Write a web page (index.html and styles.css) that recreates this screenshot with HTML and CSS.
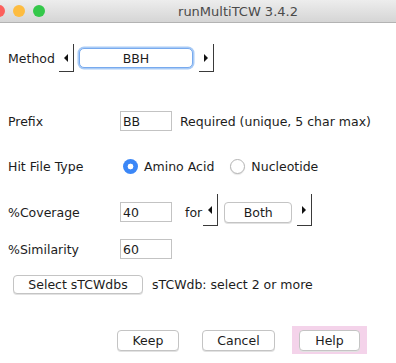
FILE: index.html
```html
<!DOCTYPE html>
<html>
<head>
    <title>runMultiTCW 3.4.2</title>
    <link rel="stylesheet" href="styles.css">
</head>
<body>
    <div class="titlebar">
        <span class="light red"></span>
        <span class="light yellow"></span>
        <span class="light green"></span>
        <span class="title">runMultiTCW 3.4.2</span>
    </div>

    <div class="content">
        <div class="row method-row">
            <span class="label method-label">Method</span>
            <span class="arrow-btn"><span class="tri tri-left"></span></span>
            <button class="btn btn-focus bbh">BBH</button>
            <span class="arrow-btn"><span class="tri tri-right"></span></span>
        </div>

        <div class="row prefix-row">
            <span class="label">Prefix</span>
            <input class="field" type="text" value="BB">
            <span class="note">Required (unique, 5 char max)</span>
        </div>

        <div class="row hit-row">
            <span class="label">Hit File Type</span>
            <span class="radio checked"></span>
            <span class="radio-text">Amino Acid</span>
            <span class="radio second"></span>
            <span class="radio-text">Nucleotide</span>
        </div>

        <div class="row cov-row">
            <span class="label">%Coverage</span>
            <input class="field" type="text" value="40">
            <span class="for">for</span>
            <span class="arrow-btn tall"><span class="tri tri-left"></span></span>
            <button class="btn both">Both</button>
            <span class="arrow-btn tall right"><span class="tri tri-right"></span></span>
        </div>

        <div class="row sim-row">
            <span class="label">%Similarity</span>
            <input class="field" type="text" value="60">
        </div>

        <div class="row select-row">
            <button class="btn select-btn">Select sTCWdbs</button>
            <span class="note">sTCWdb: select 2 or more</span>
        </div>

        <div class="row bottom-row">
            <button class="btn keep">Keep</button>
            <button class="btn cancel">Cancel</button>
            <span class="help-wrap"><button class="btn help">Help</button></span>
        </div>
    </div>
</body>
</html>
```

FILE: styles.css
```css
body {
    margin: 0;
    background-color: #ffffff;
    font-family: "DejaVu Sans", Verdana, sans-serif;
    font-size: 12.5px;
    color: #1c1c1c;
    width: 396px;
    height: 363px;
    overflow: hidden;
}

.titlebar {
    height: 22px;
    display: flex;
    align-items: center;
    background: linear-gradient(#ededed, #d5d5d5);
    border-bottom: 1px solid #b3b3b3;
}

.light {
    width: 12px;
    height: 12px;
    border-radius: 50%;
    margin-right: 8px;
    flex-shrink: 0;
}

.red {
    background-color: #fc605c;
    margin-left: -7px;
}

.yellow {
    background-color: #fdbc40;
}

.green {
    background-color: #34c84a;
    margin-right: 0;
}

.title {
    flex: 1;
    text-align: center;
    padding-left: 35px;
    font-size: 13px;
    color: #4a4a4a;
}

.content {
    padding-left: 8px;
}

.row {
    display: flex;
    align-items: center;
}

.label {
    width: 112px;
    flex-shrink: 0;
}

.method-row {
    margin-top: 21px;
    height: 28px;
}

.method-label {
    width: 51px;
}

.arrow-btn {
    width: 15px;
    height: 28px;
    border-right: 1px solid #3a3a3a;
    border-bottom: 1px solid #3a3a3a;
    box-sizing: border-box;
    display: flex;
    align-items: center;
    justify-content: center;
    flex-shrink: 0;
}

.arrow-btn.tall {
    height: 32px;
    margin-bottom: 4px;
}

.tri {
    width: 0;
    height: 0;
    border-top: 4px solid transparent;
    border-bottom: 4px solid transparent;
}

.tri-left {
    border-right: 4px solid #111;
}

.tri-right {
    border-left: 4px solid #111;
}

.btn {
    font-family: inherit;
    font-size: 12.5px;
    color: #1c1c1c;
    background-color: #ffffff;
    border: 1px solid #c4c4c4;
    border-radius: 4px;
    box-shadow: 0 1px 0 #e2e2e2;
    padding: 0;
    height: 21px;
}

.btn-focus {
    border: 1px solid #78aaee;
    box-shadow: 0 0 0 1.5px #a9cbf6;
    border-radius: 5px;
}

.bbh {
    width: 114px;
    height: 20px;
    margin-left: 5px;
    margin-right: 6px;
}

.prefix-row {
    margin-top: 39px;
    height: 20px;
}

.field {
    width: 52px;
    height: 20px;
    box-sizing: border-box;
    border: 1px solid #c3c3c3;
    padding: 0 2px;
    font-family: inherit;
    font-size: 12.5px;
    color: #1c1c1c;
    outline: none;
}

.note {
    margin-left: 8px;
}

.hit-row {
    margin-top: 25px;
    height: 20px;
}

.radio {
    width: 15px;
    height: 15px;
    border-radius: 50%;
    box-sizing: border-box;
    margin-left: 3px;
    flex-shrink: 0;
    border: 1px solid #b4b4b4;
    background-color: #ffffff;
    box-shadow: 0 1px 1px #e6e6e6;
}

.radio.checked {
    border: none;
    background: radial-gradient(circle, #ffffff 0 2.6px, #3b87f7 3.2px);
    box-shadow: none;
}

.radio.second {
    margin-left: 16px;
}

.radio-text {
    margin-left: 6px;
}

.cov-row {
    margin-top: 26px;
    height: 20px;
}

.for {
    margin-left: 13px;
    margin-right: 1px;
}

.both {
    width: 68px;
    margin-left: 6px;
    margin-right: 5px;
    height: 21px;
}

.sim-row {
    margin-top: 17px;
    height: 20px;
}

.select-row {
    margin-top: 15px;
    height: 20px;
}

.select-btn {
    margin-left: 5px;
    width: 130px;
    height: 19px;
}

.select-row .note {
    margin-left: 9px;
}

.bottom-row {
    margin-top: 32px;
    height: 28px;
}

.keep {
    margin-left: 109px;
    width: 62px;
}

.cancel {
    margin-left: 23px;
    width: 73px;
}

.help-wrap {
    margin-left: 17px;
    width: 75px;
    height: 28px;
    box-sizing: border-box;
    background-color: #f4d3ea;
    display: flex;
    align-items: center;
    justify-content: center;
}

.help {
    width: 61px;
}
```
